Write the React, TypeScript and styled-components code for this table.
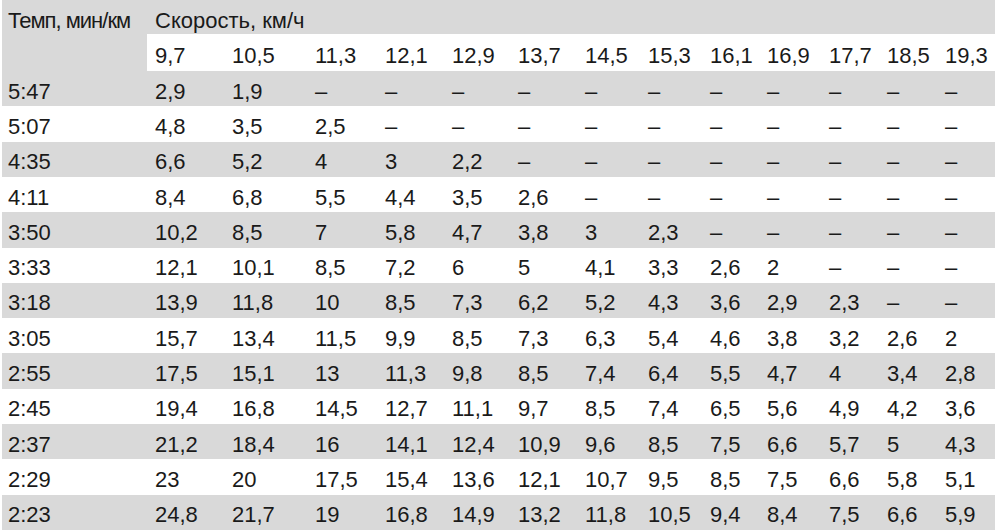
import React from 'react';
import styled, { createGlobalStyle } from 'styled-components';

const GlobalStyle = createGlobalStyle`
  html, body {
    margin: 0;
    padding: 0;
    background: #ffffff;
  }
`;

const speeds = ['9,7', '10,5', '11,3', '12,1', '12,9', '13,7', '14,5', '15,3', '16,1', '16,9', '17,7', '18,5', '19,3'];

const rows: [string, string[]][] = [
  ['5:47', ['2,9', '1,9']],
  ['5:07', ['4,8', '3,5', '2,5']],
  ['4:35', ['6,6', '5,2', '4', '3', '2,2']],
  ['4:11', ['8,4', '6,8', '5,5', '4,4', '3,5', '2,6']],
  ['3:50', ['10,2', '8,5', '7', '5,8', '4,7', '3,8', '3', '2,3']],
  ['3:33', ['12,1', '10,1', '8,5', '7,2', '6', '5', '4,1', '3,3', '2,6', '2']],
  ['3:18', ['13,9', '11,8', '10', '8,5', '7,3', '6,2', '5,2', '4,3', '3,6', '2,9', '2,3']],
  ['3:05', ['15,7', '13,4', '11,5', '9,9', '8,5', '7,3', '6,3', '5,4', '4,6', '3,8', '3,2', '2,6', '2']],
  ['2:55', ['17,5', '15,1', '13', '11,3', '9,8', '8,5', '7,4', '6,4', '5,5', '4,7', '4', '3,4', '2,8']],
  ['2:45', ['19,4', '16,8', '14,5', '12,7', '11,1', '9,7', '8,5', '7,4', '6,5', '5,6', '4,9', '4,2', '3,6']],
  ['2:37', ['21,2', '18,4', '16', '14,1', '12,4', '10,9', '9,6', '8,5', '7,5', '6,6', '5,7', '5', '4,3']],
  ['2:29', ['23', '20', '17,5', '15,4', '13,6', '12,1', '10,7', '9,5', '8,5', '7,5', '6,6', '5,8', '5,1']],
  ['2:23', ['24,8', '21,7', '19', '16,8', '14,9', '13,2', '11,8', '10,5', '9,4', '8,4', '7,5', '6,6', '5,9']],
];

const Page = styled.div`
  width: 1000px;
  height: 530px;
  padding: 0 5px 0 2px;
  box-sizing: border-box;
  background: #ffffff;
`;

const Table = styled.div`
  display: grid;
  grid-template-columns: 145px 77px 83px 70px 67px 66px 67px 63px 62px 57px 62px 58px 58px 58px;
  grid-template-rows: 34px 37px repeat(13, 1fr);
  height: 100%;
  font-family: 'Liberation Sans', Arial, sans-serif;
  font-size: 22px;
  line-height: 22px;
  color: #1a1a1a;
`;

const Cell = styled.div<{ $grey?: boolean; $first?: boolean }>`
  display: flex;
  align-items: center;
  padding: 6px 0 0 ${p => (p.$first ? '6px' : '8px')};
  background: ${p => (p.$grey ? '#d9d9d9' : '#ffffff')};
  white-space: nowrap;
`;

// narrow condensed look of the original headline
const CornerCell = styled.div`
  grid-row: 1 / span 2;
  padding: 10px 0 0 6px;
  background: #d9d9d9;
  white-space: nowrap;
  letter-spacing: -1px;
`;

const SpeedTitle = styled(Cell)`
  grid-column: 2 / span 13;
  padding-top: 8px;
`;

export default function App() {
  return (
    <>
      <GlobalStyle />
      <Page>
        <Table>
          <CornerCell>Темп, мин/км</CornerCell>
          <SpeedTitle $grey>Скорость, км/ч</SpeedTitle>
          {speeds.map(s => (
            <Cell key={s}>{s}</Cell>
          ))}
          {rows.map(([pace, values], i) => {
            const grey = i % 2 === 0;
            return (
              <React.Fragment key={pace}>
                <Cell $grey={grey} $first>
                  {pace}
                </Cell>
                {speeds.map((s, j) => (
                  <Cell key={s} $grey={grey}>
                    {values[j] ?? '–'}
                  </Cell>
                ))}
              </React.Fragment>
            );
          })}
        </Table>
      </Page>
    </>
  );
}
